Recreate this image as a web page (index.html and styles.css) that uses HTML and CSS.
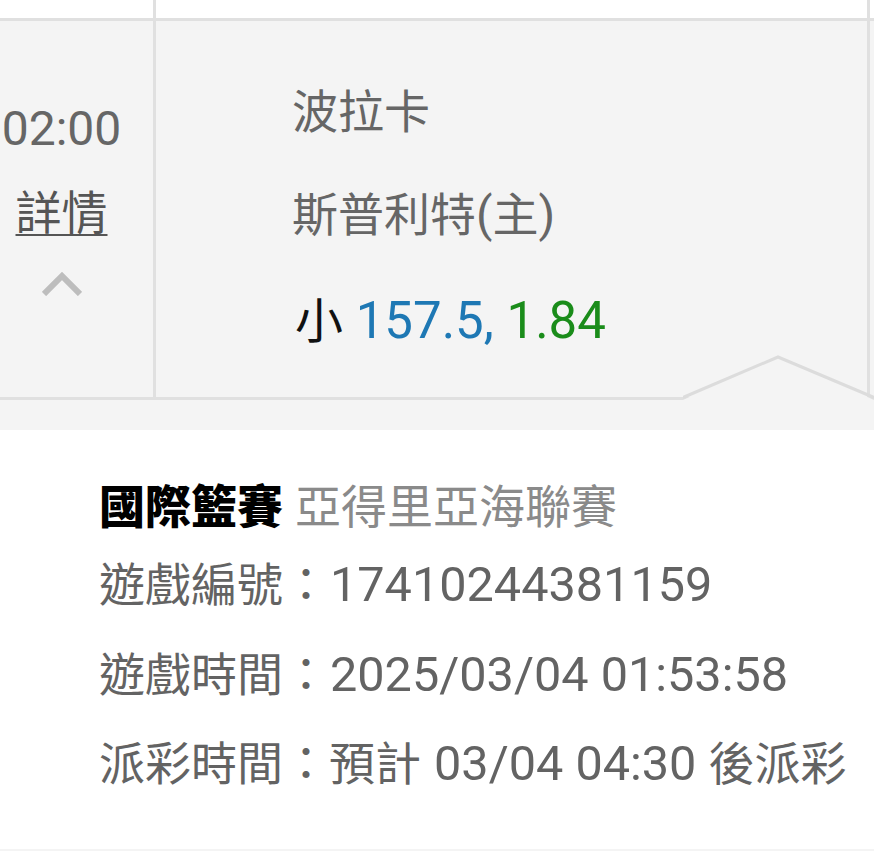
FILE: index.html
```html
<!DOCTYPE html>
<html lang="zh-Hant">
<head>
    <meta charset="UTF-8">
    <meta name="viewport" content="width=device-width, initial-scale=1.0">
    <title>注單詳情</title>
    <link rel="stylesheet" href="styles.css">
</head>
<body>
    <div class="bet-list">
        <div class="bet-row bet-row-prev">
            <div class="cell cell-time"></div>
            <div class="cell cell-main"></div>
            <div class="cell cell-edge"></div>
        </div>

        <div class="bet-row bet-row-open">
            <div class="cell cell-time">
                <div class="time">02:00</div>
                <div class="detail-line"><a href="#" class="detail-link zh">詳情</a></div>
                <svg class="chevron" width="40" height="24" viewBox="0 0 40 24">
                    <polyline points="2,22 20,4 38,22" fill="none" stroke="#bdbdbd" stroke-width="6"/>
                </svg>
            </div>
            <div class="cell cell-main">
                <div class="team"><span class="zh">波拉卡</span></div>
                <div class="team"><span class="zh">斯普利特</span>(<span class="zh">主</span>)</div>
                <div class="odds"><span class="zh pick">小</span> <span class="line">157.5,</span> <span class="price">1.84</span></div>
            </div>
            <div class="cell cell-edge"></div>
        </div>

        <div class="detail">
            <svg class="notch" width="191" height="46" viewBox="0 0 191 46">
                <polygon points="0,46 95,3 191,46" fill="#f4f4f4"/>
                <polyline points="0,43.5 95,3 191,43.5" fill="none" stroke="#dcdcdc" stroke-width="3"/>
            </svg>
            <div class="detail-card">
                <div class="league"><span class="zh sport">國際籃賽</span> <span class="zh league-name">亞得里亞海聯賽</span></div>
                <div class="info"><span class="zh">遊戲編號：</span>17410244381159</div>
                <div class="info"><span class="zh">遊戲時間：</span>2025/03/04 01:53:58</div>
                <div class="info"><span class="zh">派彩時間：預計</span> 03/04 04:30 <span class="zh">後派彩</span></div>
            </div>
        </div>
    </div>
</body>
</html>
```

FILE: styles.css
```css
* {
    margin: 0;
    padding: 0;
    box-sizing: border-box;
}

body {
    background-color: #f4f4f4;
    font-family: 'Roboto', 'Noto Sans CJK TC', sans-serif;
    font-size: 48px;
    color: #666;
}

.zh {
    font-family: 'Noto Sans CJK TC', sans-serif;
    font-size: 46px;
    line-height: 40px;
}

.bet-list {
    width: 100%;
}

.bet-row {
    display: flex;
    border-bottom: 3px solid #e0e0e0;
}

.bet-row-prev {
    background-color: #fff;
    height: 21px;
}

.bet-row-open {
    background-color: #f4f4f4;
    height: 379px;
}

.cell-time {
    width: 156px;
    flex-shrink: 0;
    border-right: 3px solid #e0e0e0;
}

.cell-main {
    width: 714px;
    flex-shrink: 0;
    border-right: 3px solid #e0e0e0;
}

.cell-edge {
    flex: 1;
}

/* time column */
.bet-row-open .cell-time {
    padding: 66px 30px 0 0;
    display: flex;
    flex-direction: column;
    align-items: center;
}

.time {
    line-height: 84px;
}

.detail-line {
    line-height: 84px;
}

.detail-link {
    color: #555;
    text-decoration: underline;
    text-decoration-thickness: 2px;
    text-underline-offset: 5px;
}

.chevron {
    display: block;
    margin-top: 17px;
}

/* teams column */
.bet-row-open .cell-main {
    padding: 39px 0 0 136px;
}

.team {
    line-height: 103px;
}

.odds {
    font-size: 51px;
    line-height: 103px;
    padding-top: 3px;
}

.pick {
    color: #111;
    font-size: 48px;
    margin-left: 3px;
}

.line {
    color: #1e78b4;
}

.price {
    color: #1a8c1a;
}

/* detail panel */
.detail {
    position: relative;
    padding-top: 30px;
}

.notch {
    position: absolute;
    top: -46px;
    right: 0;
    display: block;
}

.detail-card {
    background-color: #fff;
    padding: 44px 0 40px 99px;
}

.league {
    line-height: 66px;
}

.sport {
    color: #000;
    font-weight: 900;
}

.league-name {
    color: #8a8a8a;
}

.info {
    font-size: 48.6px;
    line-height: 89.5px;
    color: #636363;
}

.info .zh {
    margin-right: 1px;
}
```
